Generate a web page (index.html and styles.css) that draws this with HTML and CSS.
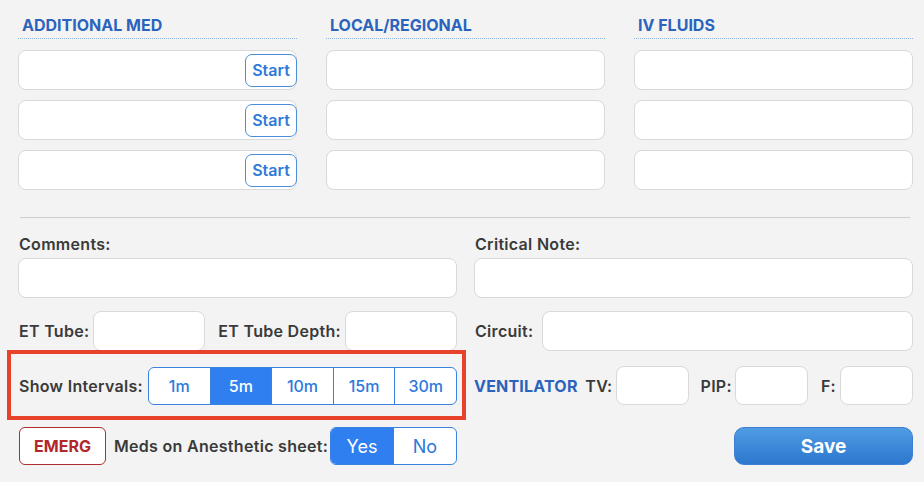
FILE: index.html
```html
<!DOCTYPE html>
<html>
  <head>
  <meta charset="utf-8">
  <title>Anesthesia record</title>
  <link rel="stylesheet" href="styles.css">
  </head>
  <body>
    <div class="sheet">

      <div class="columns">
        <div class="col">
          <div class="col_title">ADDITIONAL MED</div>
          <div class="field"><button class="start">Start</button></div>
          <div class="field"><button class="start">Start</button></div>
          <div class="field"><button class="start">Start</button></div>
        </div>
        <div class="col">
          <div class="col_title">LOCAL/REGIONAL</div>
          <div class="field"></div>
          <div class="field"></div>
          <div class="field"></div>
        </div>
        <div class="col">
          <div class="col_title">IV FLUIDS</div>
          <div class="field"></div>
          <div class="field"></div>
          <div class="field"></div>
        </div>
      </div>

      <div class="divider"></div>

      <div class="row row_notes">
        <div class="half">
          <div class="lbl">Comments:</div>
          <div class="field"></div>
        </div>
        <div class="half">
          <div class="lbl">Critical Note:</div>
          <div class="field"></div>
        </div>
      </div>

      <div class="row row_tube">
        <div class="half inline">
          <span class="lbl">ET Tube:</span>
          <div class="field small"></div>
          <span class="lbl lbl_depth">ET Tube Depth:</span>
          <div class="field small"></div>
        </div>
        <div class="half inline">
          <span class="lbl">Circuit:</span>
          <div class="field grow"></div>
        </div>
      </div>

      <div class="row row_vent">
        <div class="half inline highlight">
          <span class="lbl">Show Intervals:</span>
          <div class="segments">
            <span class="seg">1m</span>
            <span class="seg on">5m</span>
            <span class="seg">10m</span>
            <span class="seg">15m</span>
            <span class="seg">30m</span>
          </div>
        </div>
        <div class="half inline">
          <span class="vent_title">VENTILATOR</span>
          <span class="lbl lbl_tv">TV:</span>
          <div class="field tiny"></div>
          <span class="lbl lbl_pip">PIP:</span>
          <div class="field tiny"></div>
          <span class="lbl lbl_f">F:</span>
          <div class="field tiny"></div>
        </div>
      </div>

      <div class="row row_bottom">
        <div class="half inline">
          <button class="emerg">EMERG</button>
          <span class="lbl lbl_meds">Meds on Anesthetic sheet:</span>
          <div class="segments yesno">
            <span class="seg on">Yes</span>
            <span class="seg">No</span>
          </div>
        </div>
        <div class="half inline right">
          <button class="save">Save</button>
        </div>
      </div>

    </div>
  </body>
</html>
```

FILE: styles.css
```css
    body{
      margin: 0;
      background-color: #f3f3f3;
      font-family: "Inter", "Liberation Sans", sans-serif;
      color: #3a3a3a;
    }

    .sheet{
      width: 924px;
      height: 482px;
      padding: 0 0 0 18px;
      box-sizing: border-box;
      overflow: hidden;
    }

    .columns{
      display: flex;
      gap: 29px;
    }
    .col{
      width: 279px;
      display: flex;
      flex-direction: column;
      gap: 10px;
    }
    .col_title{
      padding: 15px 0 3px 4px;
      line-height: 20px;
      font-size: 16px;
      font-weight: 700;
      color: #2b63bd;
      border-bottom: 1px dotted #8db2e2;
      margin-bottom: 1px;
    }

    .field{
      height: 38px;
      background-color: white;
      border: 1px solid #d9d9d9;
      border-radius: 8px;
      display: flex;
      align-items: center;
      justify-content: flex-end;
    }

    .start{
      height: 33px;
      width: 52px;
      margin-right: -1px;
      background: white;
      border: 1.5px solid #4a8ddb;
      border-radius: 7px;
      color: #2f7bd8;
      font-family: inherit;
      font-size: 16px;
      font-weight: 600;
      padding: 0;
    }

    .divider{
      margin: 27px 14px 0 2px;
      border-top: 1px solid #cdcdcd;
    }

    .row{
      display: flex;
      gap: 17px;
    }
    .half{
      width: 439px;
    }
    .inline{
      display: flex;
      align-items: center;
    }
    .right{
      justify-content: flex-end;
    }

    .lbl{
      font-size: 16px;
      font-weight: 600;
      letter-spacing: 0.3px;
      line-height: 20px;
      color: #3a3a3a;
      padding-left: 1px;
      white-space: nowrap;
    }

    .row_notes{ margin-top: 16px; }
    .row_notes .lbl{ margin-bottom: 4px; }

    .row_tube{ margin-top: 13px; height: 40px; }
    .row_tube .field{ height: 38px; }
    .field.small{ width: 110px; margin-left: 4px; }
    .lbl_depth{ margin-left: auto; }
    .field.grow{ flex: 1; margin-left: 9px; }

    .row_vent{ margin-top: 15px; height: 39px; }
    .highlight{ position: relative; }
    .highlight::after{
      content: "";
      position: absolute;
      top: -16px;
      left: -11px;
      right: -9px;
      bottom: -15px;
      border: 4px solid #e8432a;
      pointer-events: none;
    }

    .segments{
      display: flex;
      margin-left: auto;
      width: 307px;
      height: 36px;
      border: 1px solid #3b82e0;
      border-radius: 6px;
      overflow: hidden;
      background: white;
    }
    .seg{
      flex: 1;
      display: flex;
      align-items: center;
      justify-content: center;
      font-size: 16px;
      font-weight: 500;
      color: #2d78dc;
      border-left: 1px solid #3b82e0;
    }
    .seg:first-child{ border-left: none; }
    .seg.on{
      background-color: #2f7ff0;
      color: white;
    }

    .vent_title{
      font-size: 16px;
      font-weight: 700;
      letter-spacing: 0.2px;
      color: #2b63bd;
    }
    .lbl_tv{ margin-left: auto; }
    .lbl_pip{ margin-left: 11px; }
    .lbl_f{ margin-left: 12px; }
    .field.tiny{ width: 71px; height: 37px; margin-left: 3px; }
    .lbl_f + .field.tiny{ margin-left: 4px; }

    .row_bottom{ margin-top: 22px; height: 38px; }
    .emerg{
      width: 87px;
      height: 38px;
      margin-left: 1px;
      background: white;
      border: 1.5px solid #b12c2c;
      border-radius: 6px;
      color: #b0282a;
      font-family: inherit;
      font-size: 16px;
      font-weight: 700;
      padding: 0;
    }
    .lbl_meds{ margin-left: 7px; }
    .yesno{ width: 125px; height: 36px; }
    .yesno .seg{ font-size: 18px; font-weight: 400; }

    .save{
      width: 179px;
      height: 38px;
      border: 1px solid #3b7fcf;
      border-radius: 10px;
      background: linear-gradient(#4f9ce4, #2d77cf);
      color: white;
      font-family: inherit;
      font-size: 19px;
      font-weight: 700;
      padding: 0;
    }
```
